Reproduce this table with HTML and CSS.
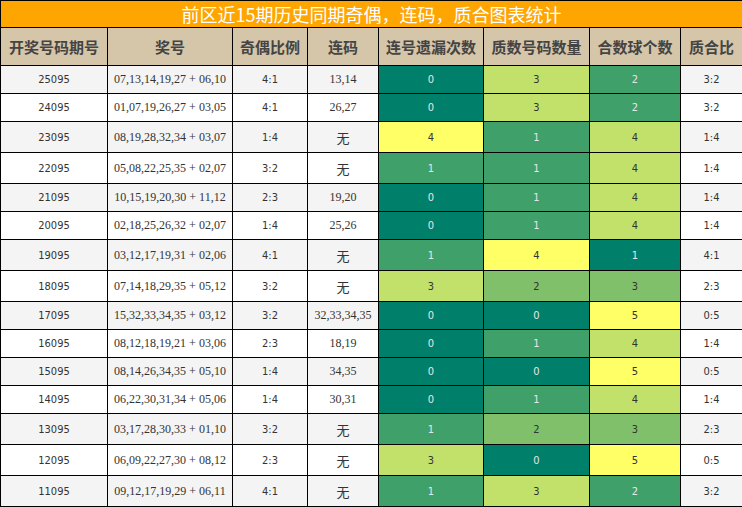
FILE: index.html
```html
<!DOCTYPE html>
<html lang="zh">
<head>
<meta charset="utf-8">
<title>前区近15期历史同期奇偶，连码，质合图表统计</title>
<link rel="stylesheet" href="styles.css">
</head>
<body>
<table class="stats">
  <colgroup>
    <col class="c-issue"><col class="c-nums"><col class="c-oe"><col class="c-seq">
    <col class="c-miss"><col class="c-prime"><col class="c-comp"><col class="c-ratio">
  </colgroup>
  <thead>
    <tr class="title-row"><th colspan="8" class="title">前区近15期历史同期奇偶，连码，质合图表统计</th></tr>
    <tr class="head-row">
      <th>开奖号码期号</th><th>奖号</th><th>奇偶比例</th><th>连码</th>
      <th>连号遗漏次数</th><th>质数号码数量</th><th>合数球个数</th><th>质合比</th>
    </tr>
  </thead>
  <tbody>
    <tr class="row odd first"><td class="sans">25095</td><td class="serif">07,13,14,19,27 + 06,10</td><td class="sans">4:1</td><td class="serif">13,14</td><td class="sans l0">0</td><td class="sans l3">3</td><td class="sans l1">2</td><td class="sans">3:2</td></tr>
    <tr class="row"><td class="sans">24095</td><td class="serif">01,07,19,26,27 + 03,05</td><td class="sans">4:1</td><td class="serif">26,27</td><td class="sans l0">0</td><td class="sans l3">3</td><td class="sans l1">2</td><td class="sans">3:2</td></tr>
    <tr class="row odd tall"><td class="sans">23095</td><td class="serif">08,19,28,32,34 + 03,07</td><td class="sans">1:4</td><td class="serif none">无</td><td class="sans l4">4</td><td class="sans l1">1</td><td class="sans l3">4</td><td class="sans">1:4</td></tr>
    <tr class="row tall"><td class="sans">22095</td><td class="serif">05,08,22,25,35 + 02,07</td><td class="sans">3:2</td><td class="serif none">无</td><td class="sans l1">1</td><td class="sans l1">1</td><td class="sans l3">4</td><td class="sans">1:4</td></tr>
    <tr class="row odd"><td class="sans">21095</td><td class="serif">10,15,19,20,30 + 11,12</td><td class="sans">2:3</td><td class="serif">19,20</td><td class="sans l0">0</td><td class="sans l1">1</td><td class="sans l3">4</td><td class="sans">1:4</td></tr>
    <tr class="row"><td class="sans">20095</td><td class="serif">02,18,25,26,32 + 02,07</td><td class="sans">1:4</td><td class="serif">25,26</td><td class="sans l0">0</td><td class="sans l1">1</td><td class="sans l3">4</td><td class="sans">1:4</td></tr>
    <tr class="row odd tall"><td class="sans">19095</td><td class="serif">03,12,17,19,31 + 02,06</td><td class="sans">4:1</td><td class="serif none">无</td><td class="sans l1">1</td><td class="sans l4">4</td><td class="sans l0">1</td><td class="sans">4:1</td></tr>
    <tr class="row tall"><td class="sans">18095</td><td class="serif">07,14,18,29,35 + 05,12</td><td class="sans">3:2</td><td class="serif none">无</td><td class="sans l3">3</td><td class="sans l2">2</td><td class="sans l2">3</td><td class="sans">2:3</td></tr>
    <tr class="row odd"><td class="sans">17095</td><td class="serif">15,32,33,34,35 + 03,12</td><td class="sans">3:2</td><td class="serif">32,33,34,35</td><td class="sans l0">0</td><td class="sans l0">0</td><td class="sans l4">5</td><td class="sans">0:5</td></tr>
    <tr class="row"><td class="sans">16095</td><td class="serif">08,12,18,19,21 + 03,06</td><td class="sans">2:3</td><td class="serif">18,19</td><td class="sans l0">0</td><td class="sans l1">1</td><td class="sans l3">4</td><td class="sans">1:4</td></tr>
    <tr class="row odd"><td class="sans">15095</td><td class="serif">08,14,26,34,35 + 05,10</td><td class="sans">1:4</td><td class="serif">34,35</td><td class="sans l0">0</td><td class="sans l0">0</td><td class="sans l4">5</td><td class="sans">0:5</td></tr>
    <tr class="row"><td class="sans">14095</td><td class="serif">06,22,30,31,34 + 05,06</td><td class="sans">1:4</td><td class="serif">30,31</td><td class="sans l0">0</td><td class="sans l1">1</td><td class="sans l3">4</td><td class="sans">1:4</td></tr>
    <tr class="row odd tall"><td class="sans">13095</td><td class="serif">03,17,28,30,33 + 01,10</td><td class="sans">3:2</td><td class="serif none">无</td><td class="sans l1">1</td><td class="sans l2">2</td><td class="sans l2">3</td><td class="sans">2:3</td></tr>
    <tr class="row tall"><td class="sans">12095</td><td class="serif">06,09,22,27,30 + 08,12</td><td class="sans">2:3</td><td class="serif none">无</td><td class="sans l3">3</td><td class="sans l0">0</td><td class="sans l4">5</td><td class="sans">0:5</td></tr>
    <tr class="row odd tall"><td class="sans">11095</td><td class="serif">09,12,17,19,29 + 06,11</td><td class="sans">4:1</td><td class="serif none">无</td><td class="sans l1">1</td><td class="sans l3">3</td><td class="sans l1">2</td><td class="sans">3:2</td></tr>
  </tbody>
</table>
</body>
</html>
```

FILE: styles.css
```css
html, body {
  margin: 0;
  padding: 0;
  background: #ffffff;
}

.stats {
  border-collapse: collapse;
  table-layout: fixed;
  width: 742px;
}

.c-issue { width: 107px; }
.c-nums  { width: 125px; }
.c-oe    { width: 75px; }
.c-seq   { width: 71px; }
.c-miss  { width: 105px; }
.c-prime { width: 106px; }
.c-comp  { width: 91px; }
.c-ratio { width: 62px; }

.stats th,
.stats td {
  border: 1px solid #000;
  padding: 0;
  text-align: center;
  vertical-align: middle;
  overflow: hidden;
  white-space: nowrap;
}

.title-row { height: 27px; }
.title {
  background: #ffa500;
  color: #ffffff;
  font-family: "Noto Sans CJK SC", "Noto Sans", sans-serif;
  font-size: 18px;
  font-weight: normal;
  line-height: 24px;
  border-bottom-width: 2px;
}

.head-row { height: 38px; }
.head-row th {
  background: #d5c5a9;
  color: #444444;
  font-family: "Noto Sans CJK SC", "Noto Sans", sans-serif;
  font-size: 15px;
  font-weight: bold;
}

.row { height: 28px; background: #ffffff; }
.row.odd { background: #f4f4f4; }
.row.tall { height: 31px; }

.row td { color: #333333; }

.sans {
  font-family: "DejaVu Sans Condensed", "DejaVu Sans", sans-serif;
  font-stretch: condensed;
  font-size: 11px;
}

.serif {
  font-family: "Liberation Serif", "Noto Sans CJK SC", serif;
  font-size: 12px;
}

.serif.none {
  font-family: "Noto Sans CJK SC", sans-serif;
  font-size: 13px;
}

.l0 { background: #00806a; color: #e6e6e6 !important; }
.l1 { background: #40a06a; color: #e6e6e6 !important; }
.l2 { background: #80c06a; }
.l3 { background: #c2e16a; }
.l4 { background: #ffff66; }
```
